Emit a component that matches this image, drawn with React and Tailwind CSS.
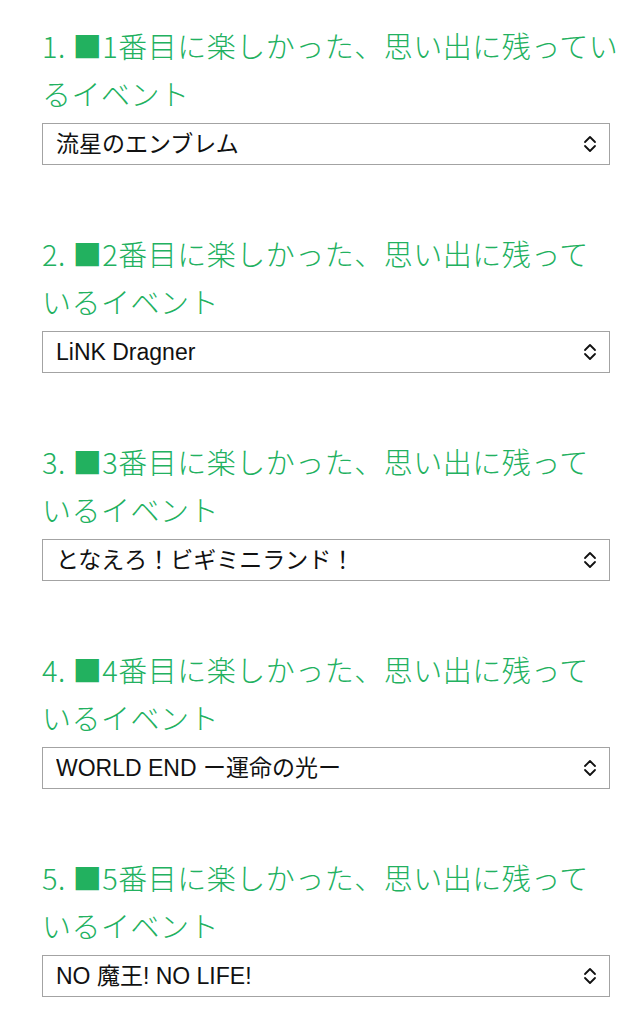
const items = [
  { n: 1, lines: ['1. ■1番目に楽しかった、思い出に残ってい', 'るイベント'], value: '流星のエンブレム' },
  { n: 2, lines: ['2. ■2番目に楽しかった、思い出に残って', 'いるイベント'], value: 'LiNK Dragner' },
  { n: 3, lines: ['3. ■3番目に楽しかった、思い出に残って', 'いるイベント'], value: 'となえろ！ビギミニランド！' },
  { n: 4, lines: ['4. ■4番目に楽しかった、思い出に残って', 'いるイベント'], value: 'WORLD END ー運命の光ー' },
  { n: 5, lines: ['5. ■5番目に楽しかった、思い出に残って', 'いるイベント'], value: 'NO 魔王! NO LIFE!' },
]

function Chevrons() {
  return (
    <svg width="14" height="18" viewBox="0 0 14 18" fill="none" stroke="#111" strokeWidth="1.8" strokeLinecap="round" strokeLinejoin="round">
      <path d="M2 7 L7 2 L12 7" />
      <path d="M2 11 L7 16 L12 11" />
    </svg>
  )
}

function Question({ item }) {
  return (
    <div className="mb-[64px]">
      <h3 className="text-[29px] leading-[48px] font-light text-[#22b15f] tracking-[0.5px]">
        {item.lines.map((l, i) => (
          <div key={i} className="whitespace-nowrap">{l}</div>
        ))}
      </h3>
      <div className="relative mt-[6px]">
        <select
          defaultValue={item.value}
          className="w-full h-[42px] appearance-none bg-white border border-[#a3a3a3] rounded-none pl-[13px] pr-10 text-[23px] text-[#111] outline-none"
          style={{ fontFamily: '"Liberation Sans", "Noto Sans CJK JP", sans-serif' }}
        >
          <option>{item.value}</option>
        </select>
        <div className="pointer-events-none absolute right-[13px] top-1/2 -translate-y-1/2">
          <Chevrons />
        </div>
      </div>
    </div>
  )
}

export default function App() {
  return (
    <div className="bg-white min-h-screen pl-[42px] pr-[28px] pt-[21px]" style={{ fontFamily: '"Noto Sans CJK JP", "Noto Sans", sans-serif' }}>
      {items.map(item => <Question key={item.n} item={item} />)}
    </div>
  )
}
